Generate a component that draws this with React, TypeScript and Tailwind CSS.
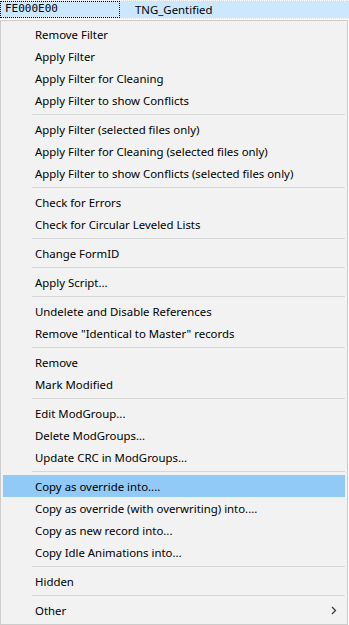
import React from "react";

type Entry = string | null;

const groups: string[][] = [
  ["Remove Filter", "Apply Filter", "Apply Filter for Cleaning", "Apply Filter to show Conflicts"],
  [
    "Apply Filter (selected files only)",
    "Apply Filter for Cleaning (selected files only)",
    "Apply Filter to show Conflicts (selected files only)",
  ],
  ["Check for Errors", "Check for Circular Leveled Lists"],
  ["Change FormID"],
  ["Apply Script..."],
  ["Undelete and Disable References", 'Remove "Identical to Master" records'],
  ["Remove", "Mark Modified"],
  ["Edit ModGroup...", "Delete ModGroups...", "Update CRC in ModGroups..."],
  [
    "Copy as override into....",
    "Copy as override (with overwriting) into....",
    "Copy as new record into...",
    "Copy Idle Animations into...",
  ],
  ["Hidden"],
  ["Other"],
];

function Item({ label }: { label: string }) {
  const active = label === "Copy as override into....";
  const sub = label === "Other";
  return (
    <div
      className={
        "relative flex h-[22px] items-center pl-[32px] pt-[1px] text-[11.4px] text-black " +
        (active ? "bg-[#91c9f7]" : "")
      }
    >
      <span className="whitespace-nowrap">{label}</span>
      {sub && (
        <svg className="absolute right-[8px] top-[7px]" width="6" height="9" viewBox="0 0 6 9">
          <path d="M1 1 L4.5 4.5 L1 8" fill="none" stroke="#333" strokeWidth="1.2" />
        </svg>
      )}
    </div>
  );
}

function Sep() {
  return (
    <div className="flex h-[7px] items-center pl-[29px]">
      <div className="h-px w-full bg-[#d7d7d7]" />
    </div>
  );
}

export default function App() {
  const entries: Entry[] = [];
  groups.forEach((g, i) => {
    if (i > 0) entries.push(null);
    g.forEach((l) => entries.push(l));
  });
  return (
    <div
      className="h-[625px] w-[349px] overflow-hidden bg-white"
      style={{ fontFamily: '"Noto Sans", "Open Sans", sans-serif' }}
    >
      <div className="flex h-[19px] items-stretch border-y border-dotted border-y-[#ffffff] bg-[#cce8ff]">
        <div
          className="flex w-[120px] items-center border border-dotted border-black pl-[4px] text-[11px] text-black"
          style={{ fontFamily: '"DejaVu Sans Mono", monospace' }}
        >
          FE000E00
        </div>
        <div className="flex items-center pl-[15px] text-[11.4px] text-black">TNG_Gentified</div>
      </div>
      <div className="h-px" />
      <div className="h-[605px] w-[348px] border border-[#cccccc] bg-[#f2f2f2] px-[2px] py-[2px]">
        {entries.map((e, i) => (e === null ? <Sep key={i} /> : <Item key={i} label={e} />))}
      </div>
    </div>
  );
}
